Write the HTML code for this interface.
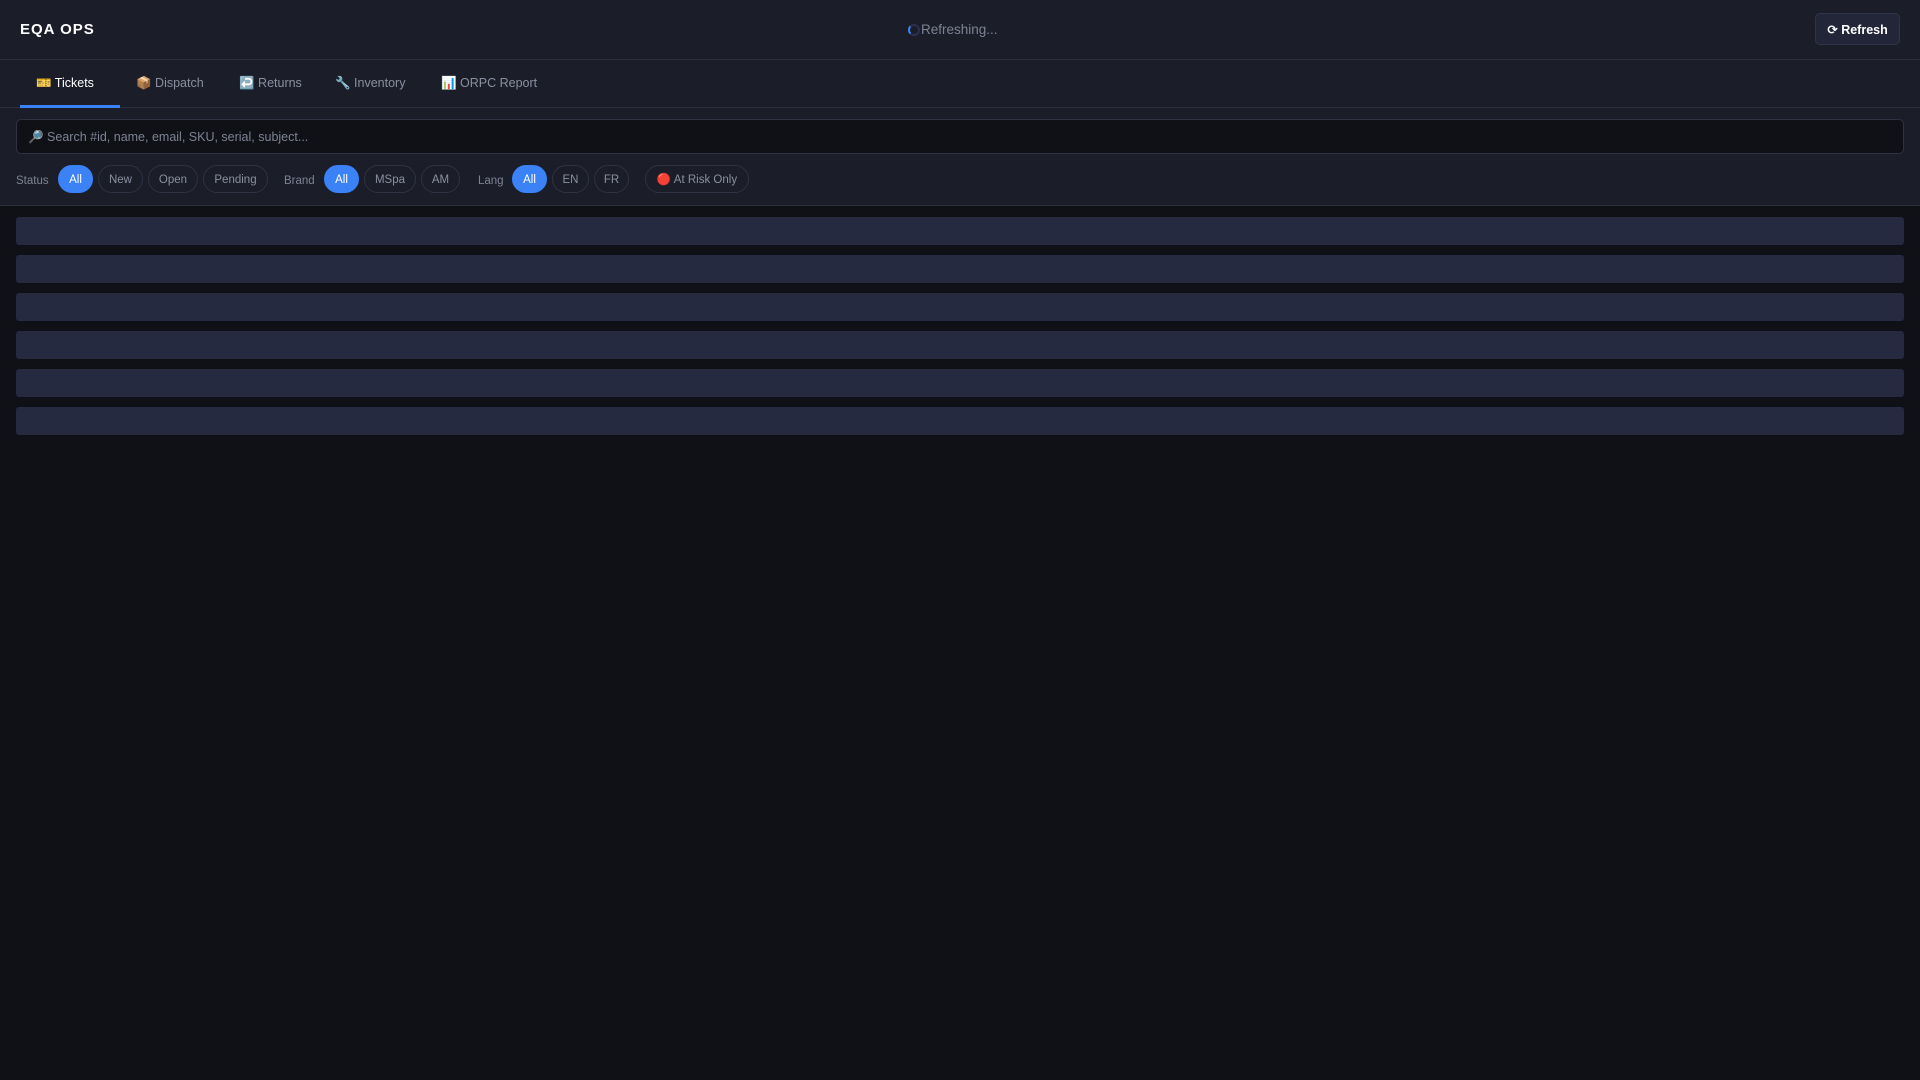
<!DOCTYPE html>
<html><head><meta charset="utf-8"><style>
*{box-sizing:border-box;margin:0;padding:0}
body{width:1920px;height:1080px;background:#101116;font-family:"Liberation Sans","DejaVu Sans",sans-serif;color:#9aa0b0;overflow:hidden}
.hdr{height:60px;background:#1b1d29;border-bottom:1px solid #2c3040;position:relative}
.title{position:absolute;left:20px;top:21px;font-size:15px;font-weight:bold;color:#fff;letter-spacing:1px}
.ref{position:absolute;left:908px;top:22px;font-size:13.5px;color:#7d8394;display:flex;align-items:center}
.spin{width:12px;height:12px;border:2px solid #2b3150;border-left-color:#3b82f6;border-radius:50%;margin-right:1px}
.btn{position:absolute;left:1815px;top:13px;width:85px;height:32px;background:#222638;border:1px solid #30354a;border-radius:5px;color:#fff;font-size:12.5px;font-weight:bold;display:flex;align-items:center;justify-content:center}
.tabs{height:48px;background:#1b1d29;border-bottom:1px solid #2c3040;position:relative}
.tab{position:absolute;top:0;height:48px;line-height:46px;font-size:12.5px;color:#8a90a0;padding:0 16px}
.tab.on{color:#fff;border-bottom:3px solid #3b82f6}
.filt{height:98px;background:#1b1d29;border-bottom:1px solid #2c3040;position:relative}
.search{position:absolute;left:16px;top:11px;width:1888px;height:35px;background:#101116;border:1px solid #2e3242;border-radius:5px;font-size:12.5px;color:#7d8394;padding:0 11px;line-height:35px}
.lbl{position:absolute;top:66px;font-size:11.5px;color:#7d8394;line-height:14px}
.pill{position:absolute;top:57px;height:28px;border:1px solid #2e3242;border-radius:14px;font-size:11.5px;color:#8a90a0;text-align:center;line-height:28px}
.pill.on{background:#3b82f6;border-color:#3b82f6;color:#fff}
.sk{position:absolute;left:16px;width:1888px;height:28px;background:#262a40;border-radius:3px}
</style></head><body>
<div class="hdr"><div class="title">EQA OPS</div><div class="ref"><span class="spin"></span>Refreshing...</div><div class="btn">⟳ Refresh</div></div>
<div class="tabs">
<div class="tab on" style="left:20px;width:100px">🎫 Tickets</div>
<div class="tab" style="left:120px">📦 Dispatch</div>
<div class="tab" style="left:223px">↩️ Returns</div>
<div class="tab" style="left:319px">🔧 Inventory</div>
<div class="tab" style="left:425px">📊 ORPC Report</div>
</div>
<div class="filt">
<div class="search">🔎 Search #id, name, email, SKU, serial, subject...</div>
<div class="lbl" style="left:16px">Status</div>
<div class="pill on" style="left:58px;width:35px">All</div>
<div class="pill" style="left:98px;width:45px">New</div>
<div class="pill" style="left:148px;width:50px">Open</div>
<div class="pill" style="left:203px;width:65px">Pending</div>
<div class="lbl" style="left:284px">Brand</div>
<div class="pill on" style="left:324px;width:35px">All</div>
<div class="pill" style="left:364px;width:52px">MSpa</div>
<div class="pill" style="left:421px;width:39px">AM</div>
<div class="lbl" style="left:478px">Lang</div>
<div class="pill on" style="left:512px;width:35px">All</div>
<div class="pill" style="left:552px;width:37px">EN</div>
<div class="pill" style="left:594px;width:35px">FR</div>
<div class="pill" style="left:645px;width:104px">🔴 At Risk Only</div>
</div>
<div class="sk" style="top:217px"></div>
<div class="sk" style="top:255px"></div>
<div class="sk" style="top:293px"></div>
<div class="sk" style="top:331px"></div>
<div class="sk" style="top:369px"></div>
<div class="sk" style="top:407px"></div>
</body></html>
